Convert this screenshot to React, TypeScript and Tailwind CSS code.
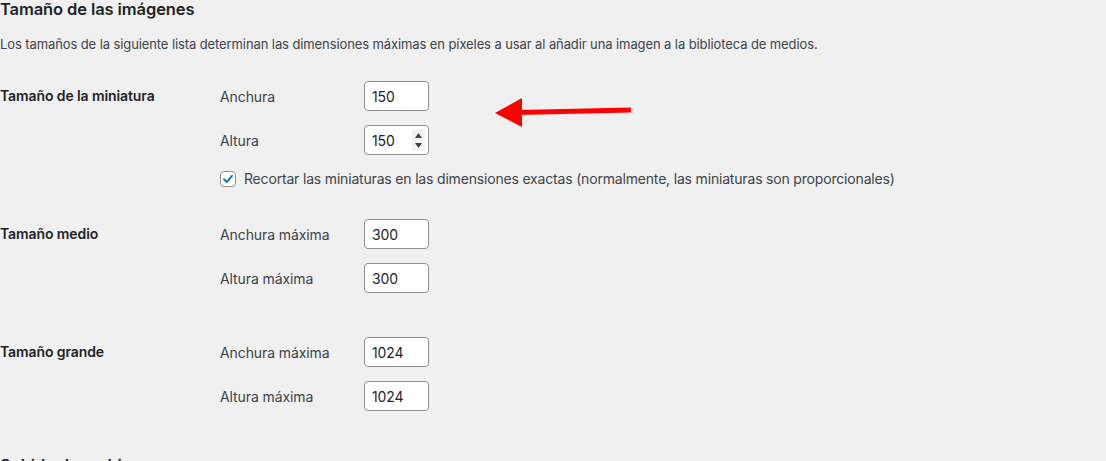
import React from "react";

const font = { fontFamily: "Inter, 'Noto Sans', sans-serif" };

function Field({ label, value, spinner }: { label: string; value: string; spinner?: boolean }) {
  return (
    <div className="flex items-center h-[30px]">
      <span className="w-[144px] text-[14px] tracking-[-0.1px] text-[#3c434a]">{label}</span>
      <div className="relative w-[65px] h-[30px] bg-white border border-[#8c8f94] rounded-[4px] flex items-center pl-[7px] text-[14px] tracking-[-0.1px] text-[#1d2327]">
        {value}
        {spinner && (
          <div className="absolute right-[3px] top-[3px] bottom-[3px] w-[13px] bg-[#f3f3f3] flex flex-col items-center justify-center gap-[5px]">
            <svg width="7" height="5" viewBox="0 0 7 5"><path d="M0 5 L3.5 0 L7 5 Z" fill="#3c434a" /></svg>
            <svg width="7" height="5" viewBox="0 0 7 5"><path d="M0 0 L3.5 5 L7 0 Z" fill="#3c434a" /></svg>
          </div>
        )}
      </div>
    </div>
  );
}

function Row({ title, children }: { title: string; children: React.ReactNode }) {
  return (
    <div className="flex">
      <div className="w-[220px] shrink-0 h-[29px] flex items-center text-[14px] tracking-[-0.1px] font-semibold text-[#1d2327]">{title}</div>
      <div className="flex flex-col gap-[14px]">{children}</div>
    </div>
  );
}

export default function App() {
  return (
    <div className="relative w-[1106px] h-[461px] overflow-hidden bg-[#f0f0f1] text-[#1d2327]" style={font}>
      <h2 className="text-[16.5px] tracking-[-0.1px] font-semibold leading-[18px] text-[#1d2327]">Tamaño de las imágenes</h2>
      <p className="mt-[17px] text-[13px] tracking-[-0.1px] leading-[18px] text-[#3c434a]">
        Los tamaños de la siguiente lista determinan las dimensiones máximas en píxeles a usar al añadir una imagen a la biblioteca de medios.
      </p>
      <div className="mt-[28px]">
        <Row title="Tamaño de la miniatura">
          <Field label="Anchura" value="150" />
          <Field label="Altura" value="150" spinner />
          <label className="flex items-center gap-[8px] text-[14px] tracking-[-0.18px] text-[#3c434a] -mt-[1px]">
            <span className="w-[16px] h-[16px] bg-white border border-[#8c8f94] rounded-[4px] flex items-center justify-center">
              <svg width="12" height="12" viewBox="0 0 12 12">
                <path d="M2 6.2 L4.8 9 L10 2.8" fill="none" stroke="#2271b1" strokeWidth="2" strokeLinecap="round" strokeLinejoin="round" />
              </svg>
            </span>
            Recortar las miniaturas en las dimensiones exactas (normalmente, las miniaturas son proporcionales)
          </label>
        </Row>
        <div className="mt-[30px]">
          <Row title="Tamaño medio">
            <Field label="Anchura máxima" value="300" />
            <Field label="Altura máxima" value="300" />
          </Row>
        </div>
        <div className="mt-[44px]">
          <Row title="Tamaño grande">
            <Field label="Anchura máxima" value="1024" />
            <Field label="Altura máxima" value="1024" />
          </Row>
        </div>
        <h2 className="mt-[45px] text-[16.5px] tracking-[-0.1px] font-semibold leading-[18px] text-[#1d2327]">Subida de archivos</h2>
      </div>
      <svg className="absolute left-0 top-0 pointer-events-none" width="1106" height="461">
        <line x1="631" y1="110" x2="518" y2="112.5" stroke="#ff0000" strokeWidth="5" />
        <polygon points="495,113 522,98 522,127" fill="#ff0000" />
      </svg>
    </div>
  );
}
